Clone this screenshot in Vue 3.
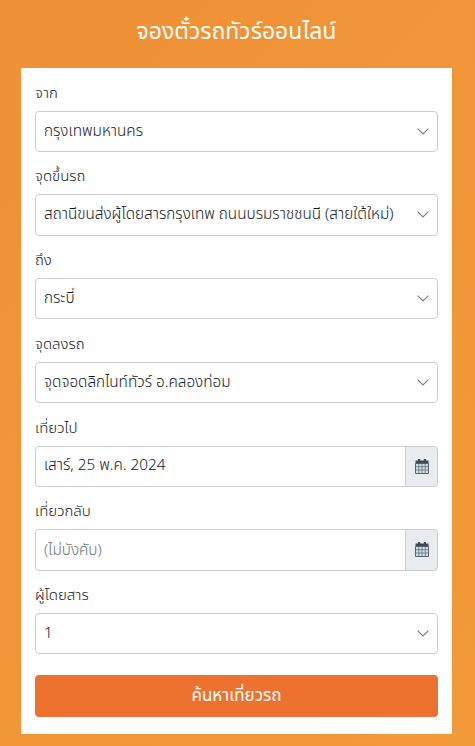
<template>
  <div class="page">
    <h1 class="title">จองตั๋วรถทัวร์ออนไลน์</h1>
    <form class="card" @submit.prevent>
      <div v-for="field in fields" :key="field.label" class="field">
        <label class="label">{{ field.label }}</label>
        <div v-if="field.type === 'select'" class="select-wrap">
          <select class="control">
            <option>{{ field.value }}</option>
          </select>
          <svg class="chevron" width="12" height="7" viewBox="0 0 12 7">
            <path d="M0.6 0.6L6 6l5.4-5.4" fill="none" stroke="#808080" stroke-width="1.2" />
          </svg>
        </div>
        <div v-else class="date-group">
          <input class="control date-input" type="text" :value="field.value" :placeholder="field.placeholder" />
          <span class="date-addon">
            <svg width="14" height="15" viewBox="0 0 14 15">
              <path d="M3 0h2.2v3H3zM8.8 0H11v3H8.8z" fill="#3f4a57" />
              <path d="M0.5 1.5h13v3H0.5z" fill="#3f4a57" />
              <path d="M0.5 4.5h13v10H0.5z" fill="#d3dde7" stroke="#55616e" stroke-width="1" />
              <path d="M3.75 5v9M7 5v9M10.25 5v9M0.5 7.7h13M0.5 11h13" stroke="#55616e" stroke-width="0.7" fill="none" />
            </svg>
          </span>
        </div>
      </div>
      <button class="search" type="submit">ค้นหาเที่ยวรถ</button>
    </form>
  </div>
</template>

<script setup>
const fields = [
  { label: 'จาก', type: 'select', value: 'กรุงเทพมหานคร' },
  { label: 'จุดขึ้นรถ', type: 'select', value: 'สถานีขนส่งผู้โดยสารกรุงเทพ ถนนบรมราชชนนี (สายใต้ใหม่)' },
  { label: 'ถึง', type: 'select', value: 'กระบี่' },
  { label: 'จุดลงรถ', type: 'select', value: 'จุดจอดลิกไนท์ทัวร์ อ.คลองท่อม' },
  { label: 'เที่ยวไป', type: 'date', value: 'เสาร์, 25 พ.ค. 2024' },
  { label: 'เที่ยวกลับ', type: 'date', value: '', placeholder: '(ไม่บังคับ)' },
  { label: 'ผู้โดยสาร', type: 'select', value: '1' }
]
</script>

<style>
html,
body {
  margin: 0;
}
</style>

<style scoped>
.page {
  width: 475px;
  height: 746px;
  box-sizing: border-box;
  padding: 0 23px 12px 21px;
  overflow: hidden;
  background: linear-gradient(135deg, #ef9136 0%, #f19a39 100%);
  font-family: "Noto Sans", "Noto Sans Thai", "Open Sans", sans-serif;
  font-weight: 350;
  color: #15181b;
}

.title {
  margin: 0;
  height: 68px;
  line-height: 61px;
  font-size: 23px;
  font-weight: 400;
  text-align: center;
  color: #fff;
}

.card {
  background: #fff;
  height: 666px;
  box-sizing: border-box;
  padding: 11.5px 14px 0;
}

.field {
  height: 83.75px;
}

.label {
  display: block;
  height: 31px;
  line-height: 24px;
  font-size: 15px;
}

.select-wrap {
  position: relative;
}

.control {
  display: block;
  width: 100%;
  height: 41.25px;
  box-sizing: border-box;
  padding: 0 8px 3px;
  border: 1px solid #ccc;
  border-radius: 4px;
  background: #fff;
  font: inherit;
  font-size: 15.3px;
  color: #15181b;
  appearance: none;
  outline: none;
}

.chevron {
  position: absolute;
  right: 9px;
  top: 17px;
}

.date-group {
  display: flex;
}

.date-input {
  flex: 1;
  width: auto;
  min-width: 0;
  padding-bottom: 1px;
  border-radius: 4px 0 0 4px;
}

.date-input::placeholder {
  color: #6c757d;
  opacity: 1;
}

.date-addon {
  display: flex;
  align-items: center;
  justify-content: center;
  width: 33px;
  height: 41.25px;
  box-sizing: border-box;
  margin-left: -1px;
  border: 1px solid #ccc;
  border-radius: 0 4px 4px 0;
  background: #e9ecef;
}

.search {
  display: block;
  width: 100%;
  height: 42px;
  margin-top: 9.25px;
  border: 0;
  border-radius: 4px;
  background: #ed722f;
  color: #fff;
  font: inherit;
  font-size: 17px;
  font-weight: 400;
}
</style>
